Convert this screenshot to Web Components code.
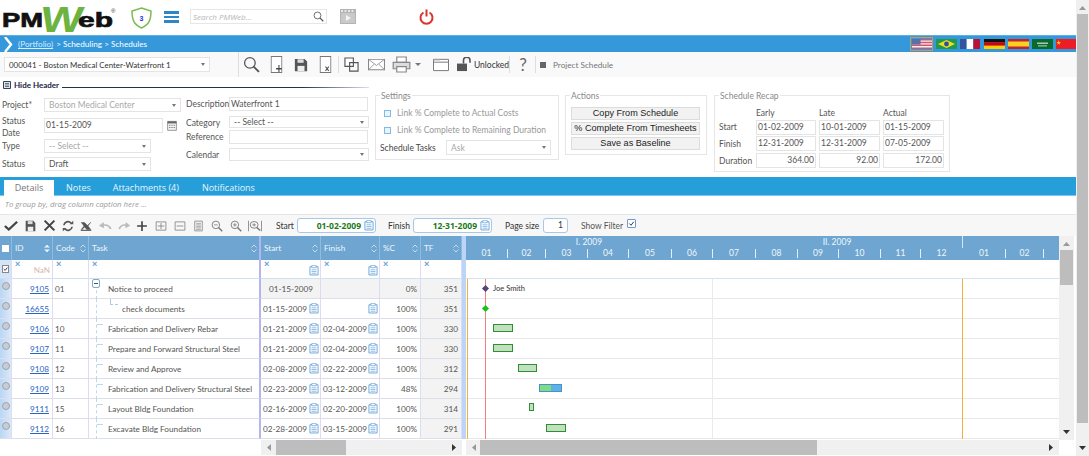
<!DOCTYPE html>
<html>
<head>
<meta charset="utf-8">
<title>PMWeb Schedules</title>
<style>
  html, body { margin: 0; padding: 0; background: #fff; overflow: hidden; }
  body { font-family: Lato, "Open Sans", sans-serif; font-size: 8.5px; color: #444; }
</style>
</head>
<body>
<pm-app>
  <pm-topbar></pm-topbar>
  <pm-crumb></pm-crumb>
  <pm-toolbar></pm-toolbar>
  <pm-header-form></pm-header-form>
  <pm-tabs></pm-tabs>
  <pm-grid-toolbar></pm-grid-toolbar>
  <pm-schedule></pm-schedule>
</pm-app>
<script>
// shared icon strokes, all drawn in a 16x16 box
const ICONS = {
  search: '<circle cx="6.500" cy="6.500" r="5" fill="none" stroke="#555" stroke-width="1.200"/><path d="M10 10l5 5" stroke="#555" stroke-width="1.800"/>',
  docPlus: '<path d="M1.500 .5h13v15h-13z" fill="#fff" stroke="#777"/><path d="M7.500 12h7M11 8.500v6.500" stroke="#444" stroke-width="1.300"/>',
  docX: '<path d="M1.500 .5h13v15h-13z" fill="#fff" stroke="#777"/><path d="M8 10l4 4M12 10l-4 4" stroke="#444" stroke-width="1.200"/>',
  save: '<path d="M1 1h11l3 3v11H1z" fill="#555"/><path d="M4 1.500h7v4H4z" fill="#ddd"/><path d="M4 9h8v6H4z" fill="#eee"/>',
  copy: '<path d="M1 1h9v9H1z" fill="#fff" stroke="#555" stroke-width="1.200"/><path d="M6 6h9v9H6z" fill="none" stroke="#555" stroke-width="1.200"/>',
  mail: '<path d="M.5 2.500h15v11H.5z" fill="#fff" stroke="#888"/><path d="M.5 2.500L8 9l7.500-6.500M.5 13.500L6 7.500M15.500 13.500L10 7.500" fill="none" stroke="#888" stroke-width=".8"/>',
  print: '<path d="M4 1h8v5H4z" fill="#fff" stroke="#888"/><path d="M1 6h14v6H1z" fill="#ddd" stroke="#888"/><path d="M4 10h8v5H4z" fill="#fff" stroke="#888"/>',
  folder: '<path d="M.5 2.500h15v12H.5z" fill="#fff" stroke="#777"/><path d="M.5 5.500h15" stroke="#777"/><path d="M1 3h6v2H1z" fill="#ddd"/>',
  lock: '<path d="M0 7h10v8H0z" fill="#555"/><path d="M6.500 7V3.500a3.200 3.200 0 0 1 6.500 0V6" fill="none" stroke="#555" stroke-width="1.600"/>',
  check: '<path d="M1 8.500l4.500 4.500L15 3.500" fill="none" stroke="#444" stroke-width="2.600"/>',
  cross: '<path d="M2 2l12 12M14 2L2 14" stroke="#444" stroke-width="2.600"/>',
  refresh: '<path d="M2.500 7a5.500 5.500 0 0 1 9.500-3M13.500 9a5.500 5.500 0 0 1-9.500 3" fill="none" stroke="#555" stroke-width="2.200"/><path d="M10 5.500h5V1zM6 10.500H1V15z" fill="#555"/>',
  excelX: '<path d="M1 3h5l4 4 4-4h1l-4 5 4 5H9L6 9.500 3 13H1l4-5z" fill="#555"/><path d="M1 13h14v1.500H1z" fill="#555"/>',
  undo: '<path d="M14.500 12C13 7.500 9.500 6 5 7" fill="none" stroke="#bbb" stroke-width="2.200"/><path d="M6.500 2.500L1 7.500l6 3.500z" fill="#bbb"/>',
  redo: '<path d="M1.500 12C3 7.500 6.500 6 11 7" fill="none" stroke="#bbb" stroke-width="2.200"/><path d="M9.500 2.500l5.500 5-6 3.500z" fill="#bbb"/>',
  plus: '<path d="M8 1.500v13M1.500 8h13" stroke="#444" stroke-width="2.200"/>',
  boxPlus: '<path d="M1.500 2.500h13v11h-13z" fill="none" stroke="#777"/><path d="M8 4v8M3.500 8h9" stroke="#777"/>',
  boxMinus: '<path d="M1.500 2.500h13v11h-13z" fill="none" stroke="#777"/><path d="M3.500 8h9" stroke="#777"/>',
  list: '<path d="M2.500 1.500h11v13h-11z" fill="none" stroke="#777"/><path d="M4.500 4.500h7M4.500 6.500h7M4.500 8.500h7M4.500 10.500h7M4.500 12.500h7" stroke="#777" stroke-width=".8"/>',
  zoomOut: '<circle cx="6.500" cy="6.500" r="5" fill="none" stroke="#777" stroke-width="1.200"/><path d="M10 10l5 5" stroke="#777" stroke-width="1.800"/><path d="M4 6.500h5" stroke="#777"/>',
  zoomIn: '<circle cx="6.500" cy="6.500" r="5" fill="none" stroke="#777" stroke-width="1.200"/><path d="M10 10l5 5" stroke="#777" stroke-width="1.800"/><path d="M4 6.500h5M6.500 4v5" stroke="#777"/>',
  zoomFit: '<path d="M.5 1v14M15.500 1v14" stroke="#777"/><circle cx="7" cy="6.500" r="4.500" fill="none" stroke="#777" stroke-width="1.100"/><path d="M10 10l4 4" stroke="#777" stroke-width="1.600"/><path d="M5 6.500h4M7 4.500v4" stroke="#777"/>',
  sched: '<path d="M1.500 2.500h13v12h-13z" fill="#fff" stroke="#5b9bd5" stroke-width="1.300"/><path d="M4.500 .5h7v3.500h-7z" fill="#fff" stroke="#5b9bd5"/><path d="M4 7h8M4 9.500h8M4 12h8" stroke="#5b9bd5"/>',
  calendar: '<path d="M1 2h14v13H1z" fill="#f4f4f4" stroke="#666"/><path d="M1 2h14v3H1z" fill="#666"/><path d="M3.500 7h2v1.500h-2zM7 7h2v1.500H7zM10.500 7h2v1.500h-2zM3.500 10h2v1.500h-2zM7 10h2v1.500H7zM10.500 10h2v1.500h-2z" fill="#777"/>'
};

function icon(name, w, h, extra) {
  return `<svg viewBox="0 0 16 16" width="${w}" height="${h || w}" preserveAspectRatio="none" style="display:block;flex:none;${extra || ''}">${ICONS[name]}</svg>`;
}

class PmElement extends HTMLElement {
  constructor() {
    super();
    this.attachShadow({mode: 'open'});
  }

  connectedCallback() {
    this.shadowRoot.innerHTML = this.render();
  }
}

class PmApp extends PmElement {
  render() {
    return `<style>
      :host { display: flex; width: 1089px; height: 456px; overflow: hidden; }
      main { width: 1076px; display: flex; flex-direction: column; }
    </style>
    <main><slot></slot></main>
    <pm-scrollbar vertical thumb-start="14" thumb-size="409" style="width:13px;height:456px"></pm-scrollbar>`;
  }
}

class PmScrollbar extends PmElement {
  render() {
    const vertical = this.hasAttribute('vertical');
    const start = this.getAttribute('thumb-start');
    const size = this.getAttribute('thumb-size');
    const arrows = vertical
      ? ['<path d="M1 5l3.500-4 3.500 4z" fill="#999"/>', '<path d="M1 1l3.500 4 3.500-4z" fill="#333"/>']
      : ['<path d="M5 1L1 4.500 5 8z" fill="#999"/>', '<path d="M1 1l4 3.500L1 8z" fill="#333"/>'];
    const svg = a => `<svg viewBox="0 0 ${vertical ? '9 6' : '6 9'}" width="${vertical ? 9 : 6}" height="${vertical ? 6 : 9}">${a}</svg>`;
    const thumb = vertical ? `height:${size}px;margin-top:${start}px` : `width:${size}px;margin-left:${start}px`;
    return `<style>
      :host { display: flex; flex-direction: ${vertical ? 'column' : 'row'}; background: #f0f0f0; align-items: stretch; flex: none; }
      .arrow { flex: none; ${vertical ? 'height:0' : 'width:0'}; display: flex; align-items: center; justify-content: center; position: relative; }
      .arrow svg { position: absolute; ${vertical ? 'left:50%;margin-left:-4.500px' : 'top:50%;margin-top:-4.500px'}; }
      .first svg { ${vertical ? 'top:5px' : 'left:5px'}; }
      .last svg { ${vertical ? 'bottom:5px' : 'right:5px'}; }
      .thumb { background: #bdbdbd; flex: none; ${vertical ? 'margin-left:1px;margin-right:1px' : 'margin-top:0;margin-bottom:0'}; ${thumb}; }
      .rest { flex: 1; }
    </style>
    <div class="arrow first">${svg(arrows[0])}</div><div class="thumb"></div><div class="rest"></div><div class="arrow last">${svg(arrows[1])}</div>`;
  }
}

class PmTopbar extends PmElement {
  render() {
    return `<style>
      :host { display: flex; align-items: flex-start; height: 35px; flex: none; background: #fff; }
      .logo { margin: 0 0 0 2px; flex: none; overflow: visible; }
      .shield { margin: 7px 0 0 14px; flex: none; }
      .burger { margin: 11px 0 0 12px; width: 15px; flex: none; display: flex; flex-direction: column; gap: 2px; }
      .burger i { display: block; height: 2.500px; background: #2f86c5; }
      .search { margin: 9px 0 0 11px; width: 137px; height: 15px; box-sizing: border-box; border: 1px solid #e6e6e6; display: flex; align-items: center; justify-content: space-between; padding: 0 2px 0 2px; color: #b5b5b5; font: italic 8px "Open Sans", sans-serif; }
      .video { margin: 9px 0 0 13px; flex: none; }
      .power { margin: 9px 0 0 63px; flex: none; }
    </style>
    <svg class="logo" width="115" height="33" viewBox="0 0 115 33">
      <text transform="translate(37 32) skewX(-9) scale(1 1.300)" x="0" y="0" font-family="Liberation Sans" font-weight="700" font-size="28" textLength="42" lengthAdjust="spacingAndGlyphs" fill="#6cb33f">W</text>
      <text x="0" y="27" font-family="Liberation Sans" font-weight="700" font-size="21" textLength="41" lengthAdjust="spacingAndGlyphs" fill="#111" stroke="#111" stroke-width=".7">PM</text>
      <text x="76" y="27" font-family="Liberation Sans" font-weight="700" font-size="20" textLength="35" lengthAdjust="spacingAndGlyphs" fill="#111" stroke="#111" stroke-width=".7">eb</text>
      <text x="109" y="13" font-family="Liberation Sans" font-size="6" fill="#333">®</text>
    </svg>
    <svg class="shield" width="21" height="22" viewBox="0 0 21 22">
      <path d="M10.500 1L20 4c0 9-2 13.500-9.500 17C3 17.500 1 13 1 4z" fill="#fff" stroke="#7dbb4e" stroke-width="1.500"/>
      <text x="10.500" y="14" font-family="Liberation Sans" font-weight="700" font-size="7" text-anchor="middle" fill="#1f2fe0">3</text>
    </svg>
    <div class="burger"><i></i><i></i><i></i></div>
    <div class="search"><span>Search PMWeb...</span>${icon('search', 11)}</div>
    <svg class="video" width="16" height="15" viewBox="0 0 16 15">
      <path d="M0 0h16v15H0z" fill="#b3b3b3"/><path d="M1 1h2v2H1zM4.500 1h2v2h-2zM8 1h2v2H8zM11.500 1h2v2h-2z" fill="#e8e8e8"/>
      <path d="M1 4h14v10H1z" fill="#c9c9c9"/><path d="M6 6l5 3-5 3z" fill="#f4f4f4"/>
    </svg>
    <svg class="power" width="15" height="16" viewBox="0 0 15 16">
      <path d="M4.500 3.500a6 6 0 1 0 6 0" fill="none" stroke="#d9342b" stroke-width="2"/><path d="M7.500 .5v7" stroke="#d9342b" stroke-width="2"/>
    </svg>`;
  }
}

class PmCrumb extends PmElement {
  render() {
    const f = (w, body, sel) => `<span class="flag${sel ? ' sel' : ''}"><svg width="${w}" height="10" viewBox="0 0 21 10" preserveAspectRatio="none">${body}</svg></span>`;
    const us = '<path d="M0 0h21v10H0z" fill="#f4f0f0"/><path d="M0 0h21v1.400H0zM0 2.800h21v1.400H0zM0 5.600h21v1.400H0zM0 8.400h21v1.600H0z" fill="#d0566c"/><path d="M0 0h9v5.600H0z" fill="#5a6ea8"/>';
    const br = '<path d="M0 0h21v10H0z" fill="#1f9a4c"/><path d="M10.500 1L19 5l-8.500 4L2 5z" fill="#f2dc22"/><circle cx="10.500" cy="5" r="2.400" fill="#2b4f9b"/>';
    const fr = '<path d="M0 0h7v10H0z" fill="#34549e"/><path d="M7 0h7v10H7z" fill="#fff"/><path d="M14 0h7v10h-7z" fill="#b8123a"/>';
    const de = '<path d="M0 0h21v3.400H0z" fill="#111"/><path d="M0 3.400h21v3.300H0z" fill="#dd0000"/><path d="M0 6.700h21V10H0z" fill="#ffce00"/>';
    const es = '<path d="M0 0h21v10H0z" fill="#c8202f"/><path d="M0 2.500h21v5H0z" fill="#f8d21f"/>';
    const sa = '<path d="M0 0h21v10H0z" fill="#0a6a2c"/><path d="M5 3.500h11v1.500H5z" fill="#a9cdb4"/><path d="M6 6.500h9v.8H6z" fill="#dfeee3"/>';
    const cn = '<path d="M0 0h21v10H0z" fill="#ee1c25"/><path d="M3.500 1.500l.8 2.200H6.500l-1.800 1.300.7 2.200-1.900-1.300-1.800 1.300.7-2.200L.6 3.700h2.100z" fill="#ffde00" transform="scale(.8)"/>';
    return `<style>
      :host { display: flex; align-items: center; height: 17px; flex: none; background: #3498db; color: #fff; border-top: 1px solid #5fb0e6; box-sizing: border-box; font: 8.200px Lato, sans-serif; }
      svg.chev { margin-left: 3px; flex: none; }
      u { margin-left: 5px; color: #d8ecfa; }
      span.t { margin-left: 3px; }
      .flags { margin-left: auto; display: flex; align-items: center; gap: 3.170px; }
      .flag { display: block; line-height: 0; }
      .flag.sel { border: 1px solid #c79a55; padding: 1px 0.500px; }
    </style>
    <svg class="chev" width="10" height="15" viewBox="0 0 10 15"><path d="M2 0l6 7.500L2 15" fill="none" stroke="#fff" stroke-width="2.400"/></svg>
    <u>(Portfolio)</u><span class="t">&gt; Scheduling &gt; Schedules</span>
    <div class="flags">${f(20, us, true)}${f(21, br)}${f(20, fr)}${f(21, de)}${f(21, es)}${f(21, sa)}${f(20, cn)}</div>`;
  }
}

class PmSelect extends PmElement {
  render() {
    const w = this.getAttribute('w');
    const h = this.getAttribute('h') || 14;
    const grey = this.hasAttribute('grey');
    const size = this.getAttribute('size') || 8.5;
    return `<style>
      :host { display: flex; align-items: center; justify-content: space-between; box-sizing: border-box; width: ${w}px; height: ${h}px; border: 1px solid #e4e4e4; background: #fff; padding: 0 4px 0 ${this.getAttribute('pad') || 4}px; color: ${grey ? '#a8a8a8' : '#555'}; font: ${size}px Lato, sans-serif; white-space: nowrap; }
      i { width: 0; height: 0; border: 2.500px solid transparent; border-top: 3px solid #777; border-bottom: 0; flex: none; }
    </style><span>${this.getAttribute('value') || ''}</span><i></i>`;
  }
}

class PmInput extends PmElement {
  render() {
    const w = this.getAttribute('w');
    const h = this.getAttribute('h') || 15;
    return `<style>
      :host { display: block; box-sizing: border-box; width: ${w}px; height: ${h}px; border: 1px solid #e4e4e4; background: #fff; padding: 0 1px; text-align: ${this.getAttribute('align') || 'left'}; color: #555; font: 8.500px/${h - 2}px Lato, sans-serif; white-space: nowrap; overflow: hidden; }
    </style>${this.getAttribute('value') || ''}`;
  }
}

class PmFieldset extends PmElement {
  render() {
    return `<style>
      :host { display: block; position: relative; box-sizing: border-box; width: ${this.getAttribute('w')}px; height: ${this.getAttribute('h')}px; border: 1px solid #e6e6e6; flex: none; padding: ${this.getAttribute('pad') || 0}; }
      b { position: absolute; left: 4px; top: -5px; padding: 0 1px; background: #fff; font: 400 8.500px/10px Lato, sans-serif; color: #8a8a8a; }
    </style><b>${this.getAttribute('legend')}</b><slot></slot>`;
  }
}

class PmToolbar extends PmElement {
  render() {
    return `<style>
      :host { display: flex; align-items: center; height: 25px; flex: none; background: #f9f9f9; font: 8.500px Lato, sans-serif; color: #555; }
      pm-select { margin-left: 4px; }
      .sep { width: 1px; height: 25px; background: #dedede; flex: none; }
      .sep.s { height: 17px; }
      .cb { width: 6px; height: 6px; background: #666; margin-left: 4px; flex: none; }
      .caret { width: 0; height: 0; border: 3px solid transparent; border-top: 3px solid #777; border-bottom: 0; flex: none; margin-left: 4px; }
      .q { width: 10px; flex: none; margin-left: 8px; font-size: 17px; line-height: 17px; color: #666; text-align: center; }
      .unl { width: 31px; flex: none; margin-left: 1px; color: #333; white-space: nowrap; }
    </style>
    <pm-select w="206" h="15" size="7.900" value="000041 - Boston Medical Center-Waterfront 1" style="color:#333"></pm-select>
    <div class="sep" style="margin-left:28px"></div>
    ${icon('search', 17, 17, 'margin-left:4px')}
    ${icon('docPlus', 13, 17, 'margin-left:10px')}
    ${icon('save', 14, 14, 'margin-left:11px')}
    ${icon('docX', 13, 17, 'margin-left:11px')}
    <div class="sep s" style="margin-left:6px"></div>
    ${icon('copy', 15, 15, 'margin-left:5px')}
    ${icon('mail', 17, 15, 'margin-left:9px')}
    ${icon('print', 19, 17, 'margin-left:7px')}
    <i class="caret"></i>
    ${icon('folder', 16, 15, 'margin-left:12px')}
    ${icon('lock', 16, 15, 'margin-left:8px')}
    <span class="unl">Unlocked</span>
    <div class="sep s" style="margin-left:4px"></div>
    <span class="q">?</span>
    <div class="sep s" style="margin-left:7px"></div>
    <div class="cb"></div>
    <span style="margin-left:7px;color:#777;font-size:8.200px">Project Schedule</span>`;
  }
}

class PmHeaderForm extends PmElement {
  render() {
    return `<style>
      :host { display: block; height: 100px; flex: none; background: #fff; font: 8.500px Lato, sans-serif; color: #555; }
      .hide { height: 15px; display: flex; align-items: center; padding-left: 3px; gap: 3px; color: #224; font-weight: 700; font-size: 8px; }
      .hide svg { flex: none; }
      .hide .rule { width: 307px; height: 1px; margin-top: 5px; background: linear-gradient(90deg, #234 0, #234 78%, #dde 100%); }
      .body { display: flex; align-items: flex-start; padding: 3px 0 0 2px; }
      .left, .right { display: grid; flex: none; align-items: start; }
      .left { margin-top: 3px; width: 184px; grid-template-columns: 42px 142px; grid-template-rows: 20px 21px 18px 14px; }
      .right { margin-top: 2px; grid-template-columns: 43px 146px; grid-template-rows: 19px 14px 18px 14px; width: 189px; }
      .lbl { line-height: 11px; margin-top: 2px; }
      .lbl.two { margin-top: -3px; line-height: 12px; }
      .row { display: flex; align-items: center; gap: 4px; }
      .check { display: flex; align-items: center; color: #999; height: 12px; gap: 6px; padding-left: 8px; }
      .check i { display: block; box-sizing: border-box; width: 7px; height: 7px; border: 1px solid #7fbbe8; background: #e8f3fb; }
      .tasks { display: flex; align-items: center; padding-left: 4px; margin-top: 4px; color: #444; }
      .actions { display: flex; flex-direction: column; gap: 2px; padding: 11px 0 0 5px; }
      .btn { box-sizing: border-box; width: 129px; height: 13px; background: #f2f2f2; border: 1px solid #dcdcdc; font: 9.100px/11px "Liberation Sans", sans-serif; color: #222; text-align: center; white-space: nowrap; }
      .recap { display: grid; grid-template-columns: 37px 63px 64px 62px; grid-template-rows: 13px 16px 17px 17px; padding: 10px 0 0 4px; align-items: center; color: #555; }
    </style>
    <div class="hide">
      <svg width="8" height="8" viewBox="0 0 8 8"><path d="M.5.5h7v7h-7z" fill="#dfe6f0" stroke="#345"/><path d="M2 2.800h4M2 5.200h4" stroke="#345"/></svg>
      <span>Hide Header</span><div class="rule"></div>
    </div>
    <div class="body">
      <div class="left">
        <span class="lbl">Project*</span><pm-select w="137" value="Boston Medical Center" grey></pm-select>
        <span class="lbl two">Status<br>Date</span><div class="row"><pm-input w="119" value="01-15-2009"></pm-input>${icon('calendar', 10, 11)}</div>
        <span class="lbl">Type</span><pm-select w="107" value="-- Select --" grey></pm-select>
        <span class="lbl">Status</span><pm-select w="107" value="Draft"></pm-select>
      </div>
      <div class="right">
        <span class="lbl">Description</span><pm-input w="139" h="14" value="Waterfront 1"></pm-input>
        <span class="lbl">Category</span><pm-select w="140" h="12" value="-- Select --"></pm-select>
        <span class="lbl">Reference</span><pm-input w="139" h="14"></pm-input>
        <span class="lbl">Calendar</span><pm-select w="140" h="13"></pm-select>
      </div>
      <pm-fieldset legend="Settings" w="184" h="65" pad="11px 0 0 0">
        <div class="check"><i></i>Link % Complete to Actual Costs</div>
        <div style="height:5px"></div>
        <div class="check"><i></i>Link % Complete to Remaining Duration</div>
        <div class="tasks"><span style="width:66px">Schedule Tasks</span><pm-select w="105" h="15" value="Ask" grey></pm-select></div>
      </pm-fieldset>
      <pm-fieldset legend="Actions" w="142" h="60" style="margin-left:6px">
        <div class="actions"><div class="btn">Copy From Schedule</div><div class="btn">% Complete From Timesheets</div><div class="btn">Save as Baseline</div></div>
      </pm-fieldset>
      <pm-fieldset legend="Schedule Recap" w="236" h="77" style="margin-left:7px">
        <div class="recap">
          <span></span><span>Early</span><span>Late</span><span>Actual</span>
          <span>Start</span><pm-input w="60" value="01-02-2009"></pm-input><pm-input w="61" value="10-01-2009"></pm-input><pm-input w="61" value="01-15-2009"></pm-input>
          <span>Finish</span><pm-input w="60" value="12-31-2009"></pm-input><pm-input w="61" value="12-31-2009"></pm-input><pm-input w="61" value="07-05-2009"></pm-input>
          <span>Duration</span><pm-input w="60" align="right" value="364.00"></pm-input><pm-input w="61" align="right" value="92.00"></pm-input><pm-input w="61" align="right" value="172.00"></pm-input>
        </div>
      </pm-fieldset>
    </div>`;
  }
}

class PmTabs extends PmElement {
  render() {
    return `<style>
      :host { display: block; flex: none; font: 9px "Open Sans", sans-serif; }
      .band { height: 19px; box-sizing: border-box; background: #259ed9; border-bottom: 1px solid #7fc4ea; display: flex; align-items: flex-end; padding-left: 4px; color: #e8f5fc; }
      span { display: block; height: 15px; line-height: 15px; }
      .on { width: 50px; height: 16px; background: #fff; color: #777; text-align: center; margin-bottom: -1px; }
      .hint { height: 19px; box-sizing: border-box; padding: 2px 0 0 5px; font: italic 7.800px/12px "Open Sans", sans-serif; color: #999; border-bottom: 1px solid #e6e6e6; }
    </style>
    <div class="band"><span class="on">Details</span><span style="margin-left:12px">Notes</span><span style="margin-left:22px">Attachments (4)</span><span style="margin-left:23px">Notifications</span></div>
    <div class="hint">To group by, drag column caption here ...</div>`;
  }
}

class PmGridToolbar extends PmElement {
  render() {
    const field = (w, text) => `<div class="date" style="width:${w}px"><b>${text}</b>${icon('sched', 10, 11)}</div>`;
    const label = (w, ml, text) => `<span style="display:block;flex:none;width:${w}px;margin-left:${ml}px;white-space:nowrap">${text}</span>`;
    return `<style>
      :host { display: flex; align-items: center; height: 21px; flex: none; background: #f7f7f7; padding-left: 4px; font: 8.500px Lato, sans-serif; color: #333; box-sizing: border-box; width: 1076px; }
      .date { box-sizing: border-box; height: 15px; border: 1px solid #a8c8e8; border-radius: 3px; background: #fff; display: flex; align-items: center; justify-content: flex-end; gap: 3px; padding-right: 1px; flex: none; }
      .date b { color: #1a7a1a; font: 700 8.500px "Open Sans", sans-serif; }
      .page { box-sizing: border-box; height: 15px; width: 25px; border: 1px solid #a8c8e8; border-radius: 3px; background: #fff; text-align: right; padding-right: 4px; line-height: 13px; flex: none; }
      .cb { box-sizing: border-box; width: 9px; height: 9px; border: 1px solid #6a9bd0; border-radius: 1px; background: #fff; margin: -4px 0 0 0; flex: none; }
      .cb svg { display: block; }
    </style>
    ${icon('check', 14, 13)}
    ${icon('save', 11, 12, 'margin-left:7px')}
    ${icon('cross', 13, 13, 'margin-left:7px')}
    ${icon('refresh', 12, 12, 'margin-left:6px')}
    ${icon('excelX', 12, 12, 'margin-left:6px')}
    ${icon('undo', 14, 12, 'margin-left:6px')}
    ${icon('redo', 13, 12, 'margin-left:6px')}
    ${icon('plus', 12, 12, 'margin-left:5px')}
    ${icon('boxPlus', 12, 12, 'margin-left:7px')}
    ${icon('boxMinus', 12, 12, 'margin-left:7px')}
    ${icon('list', 11, 12, 'margin-left:7px')}
    ${icon('zoomOut', 12, 12, 'margin-left:7px')}
    ${icon('zoomIn', 12, 12, 'margin-left:7px')}
    ${icon('zoomFit', 14, 12, 'margin-left:6px')}
    ${label(21, 14, 'Start')}
    ${field(79, '01-02-2009')}
    ${label(25, 12, 'Finish')}
    ${field(79, '12-31-2009')}
    ${label(38, 13, 'Page size')}
    <div class="page">1</div>
    ${label(46, 13, '<span style="color:#555">Show Filter</span>')}
    <div class="cb"><svg viewBox="0 0 8 8" width="7" height="7"><path d="M1.500 4l2 2 3-4" fill="none" stroke="#333" stroke-width="1.100"/></svg></div>`;
  }
}

const TASKS = [
  {id: '9105', code: '01', task: 'Notice to proceed', start: '01-15-2009', finish: '', pct: '0%', tf: '351', root: true},
  {id: '16655', code: '', task: 'check documents', start: '01-15-2009', finish: '', pct: '100%', tf: '351', child: true},
  {id: '9106', code: '10', task: 'Fabrication and Delivery Rebar', start: '01-21-2009', finish: '02-04-2009', pct: '100%', tf: '330'},
  {id: '9107', code: '11', task: 'Prepare and Forward Structural Steel', start: '01-21-2009', finish: '02-04-2009', pct: '100%', tf: '330'},
  {id: '9108', code: '12', task: 'Review and Approve', start: '02-08-2009', finish: '02-22-2009', pct: '100%', tf: '312'},
  {id: '9109', code: '13', task: 'Fabrication and Delivery Structural Steel', start: '02-23-2009', finish: '03-12-2009', pct: '48%', tf: '294'},
  {id: '9111', code: '15', task: 'Layout Bldg Foundation', start: '02-16-2009', finish: '02-20-2009', pct: '100%', tf: '314'},
  {id: '9112', code: '16', task: 'Excavate Bldg Foundation', start: '02-28-2009', finish: '03-15-2009', pct: '100%', tf: '291'}
];

class PmTaskTable extends PmElement {
  render() {
    const sort = filled => `<svg class="sort" width="6" height="9" viewBox="0 0 6 9"><path d="M.5 3.500L3 1l2.500 2.500M.5 5.500L3 8l2.500-2.500" fill="${filled ? '#eaf3fa' : 'none'}" stroke="#eaf3fa" stroke-width=".7"/></svg>`;
    const heads = [['ID', true], ['Code'], ['Task'], ['Start'], ['Finish'], ['%C'], ['TF']]
      .map(([t, f]) => `<div class="h">${t}${sort(f)}</div>`).join('');
    const x = '<i class="x">×</i>';
    const cal = icon('sched', 10, 11);
    const rows = TASKS.map((t, n) => `
      <div class="c sel"><span class="radio"></span></div>
      <div class="c id"><u>${t.id}</u></div>
      <div class="c">${t.code}</div>
      <div class="c task">
        <span class="tree"></span>
        ${t.root ? '<span class="box"><i></i></span>' : t.child ? '<span class="elbow"></span>' : '<span class="dash"></span>'}
        <span class="name" style="margin-left:${t.child ? 33 : 19}px">${t.task}</span>
      </div>
      <div class="c date${t.root ? ' grey center' : ''}"><span>${t.start}</span>${t.root ? '' : cal}</div>
      <div class="c date${t.root ? ' grey' : ''}"><span>${t.finish}</span>${t.root ? '' : cal}</div>
      <div class="c num${t.root ? ' grey' : ''}">${t.pct}</div>
      <div class="c num grey">${t.tf}</div>`).join('');
    return `<style>
      :host { display: block; width: 462px; flex: none; font: 8.200px Lato, sans-serif; color: #555; }
      .grid { display: grid; grid-template-columns: 12px 41px 36px 172px 60px 59px 41px 41px; grid-template-rows: 24px 19px repeat(8, 20px); }
      .h0, .h { background: #6ea6d1; color: #eef6fb; display: flex; align-items: center; justify-content: space-between; box-sizing: border-box; padding: 0 2px 0 3px; border-right: 1px solid #8fbbdd; }
      .h:nth-child(4) { border-right: 2px solid #b5b5ee; }
      .h0 { padding: 0; justify-content: center; }
      .h0 i { display: block; width: 7px; height: 7px; background: #fff; }
      .f { position: relative; background: #fff; box-sizing: border-box; border-right: 1px solid #dcdcf6; border-bottom: 1px solid #cfe0ee; }
      .x { position: absolute; left: 3px; top: 0; font: 700 9px/9px "Liberation Sans", sans-serif; color: #6ba3d6; }
      .f.task { border-right: 2px solid #b5b5ee; }
      .f .nan { position: absolute; right: 2px; top: 5px; color: #d8b8b0; }
      .f svg { position: absolute; right: 1px; bottom: 2px; }
      .f.sel { background: #d4e5f8; }
      .f.sel b { position: absolute; left: 2px; top: 5px; box-sizing: border-box; width: 7px; height: 8px; background: #fff; border: 1px solid #888; }
      .f.sel b svg { position: static; display: block; }
      .c { box-sizing: border-box; background: #fff; border-right: 1px solid #dcdcf6; border-bottom: 1px solid #dedeea; display: flex; align-items: center; padding: 0 2px; white-space: nowrap; position: relative; min-width: 0; }
      .sel { background: linear-gradient(90deg, #b9d6f5, #dbe9f8); padding: 0; justify-content: center; }
      .radio { display: block; width: 8px; height: 8px; margin-top: -5px; border-radius: 50%; background: #c9cdd3; border: 1px solid #9aa5b0; box-sizing: border-box; }
      .id { justify-content: flex-end; color: #2a63c4; padding-right: 3px; }
      .task { padding: 0; border-right: 2px solid #b5b5ee; }
      .tree { position: absolute; left: 7px; top: 0; bottom: -1px; border-left: 1px dashed #bcd9ea; }
      .box { position: absolute; left: 3px; top: 0; width: 8px; height: 9px; box-sizing: border-box; background: #fff; border: 1px solid #7fa9c8; border-radius: 2px; }
      .box i { position: absolute; left: 1px; right: 1px; top: 3px; height: 1px; background: #456; }
      .dash { position: absolute; left: 8px; top: 5px; width: 6px; border-top: 1px dashed #bcd9ea; }
      .elbow { position: absolute; left: 21px; top: 0; width: 7px; height: 5px; border-left: 1px dashed #a9cde3; border-bottom: 1px dashed #a9cde3; }
      .date { justify-content: space-between; padding: 0 1px 0 2px; }
      .center { justify-content: center; }
      .num { justify-content: flex-end; padding-right: 3px; }
      .grey { background: #f3f3f3; }
    </style>
    <div class="grid">
      <div class="h0"><i></i></div>${heads}
      <div class="f sel"><b><svg viewBox="0 0 7 8" width="5" height="6"><path d="M1 4l2 2 3-4" fill="none" stroke="#222" stroke-width="1.200"/></svg></b></div>
      <div class="f">${x}<span class="nan">NaN</span></div>
      <div class="f">${x}</div>
      <div class="f task">${x}</div>
      <div class="f">${x}${cal}</div>
      <div class="f">${x}${cal}</div>
      <div class="f">${x}</div>
      <div class="f">${x}</div>
      ${rows}
    </div>
    <div style="display:flex;height:15px;margin-top:1px">
      <div style="width:261px;flex:none"></div>
      <pm-scrollbar thumb-start="15" thumb-size="70" style="width:201px;height:15px"></pm-scrollbar>
    </div>`;
  }
}

const MONTHS = [['01', 42], ['02', 38], ['03', 42], ['04', 41], ['05', 43], ['06', 41], ['07', 43], ['08', 42], ['09', 41], ['10', 42], ['11', 40], ['12', 42], ['01', 43], ['02', 38], ['', 56]];

// gantt bars sit at their date position on a free canvas
const BARS = [
  {row: 2, x: 27, w: 20},
  {row: 3, x: 27, w: 20},
  {row: 4, x: 52, w: 19},
  {row: 5, x: 73, w: 23, blue: 11},
  {row: 6, x: 63, w: 5, top: 124},
  {row: 7, x: 80, w: 20}
];

class PmGantt extends PmElement {
  render() {
    const months = MONTHS.map(([m, w], n) => `<span style="width:${w}px;${n === 11 ? 'border-color:transparent' : ''}">${m}</span>`).join('');
    const rows = Array.from({length: 8}, () => '<div class="r"></div>').join('');
    const bars = BARS.map(b => {
      const top = b.top || 20 * b.row + 5;
      const inner = b.blue ? `<i style="width:${b.blue}px"></i>` : '';
      return `<div class="bar${b.blue ? ' blue' : ''}" style="left:${b.x}px;top:${top}px;width:${b.w}px">${inner}</div>`;
    }).join('');
    return `<style>
      :host { display: block; width: 593px; flex: none; font: 8.500px Lato, sans-serif; }
      .head { height: 24px; background: #6ea6d1; color: #eef6fb; position: relative; overflow: hidden; }
      .years { display: flex; height: 12px; line-height: 13px; text-align: center; }
      .years span { width: 246px; } .years span + span { width: 250px; border-right: 1px solid #d6e7f4; }
      .months { display: flex; height: 12px; line-height: 12px; text-align: center; }
      .months span { flex: none; box-sizing: border-box; border-right: 1px solid #e4f0f8; height: 9px; margin-top: 1px; line-height: 9px; }
      .filter { height: 19px; box-sizing: border-box; border-bottom: 1px solid #d5e3ee; background: #fff; }
      .canvas { position: relative; height: 160px; overflow: hidden; background: #fff; }
      .r { height: 20px; box-sizing: border-box; border-bottom: 1px solid #e8e8e8; }
      .v { position: absolute; top: 0; bottom: 0; width: 1px; }
      .bar { position: absolute; height: 8px; box-sizing: border-box; background: #c2dfbe; border: 1px solid #2f8f35; }
      .bar.blue { background: #5fb2e6; border-color: #4a8fd0; }
      .bar.blue i { display: block; height: 100%; background: #7fdc7f; }
      .dia { position: absolute; width: 5px; height: 5px; transform: rotate(45deg); }
      .who { position: absolute; left: 27px; top: 5px; font-size: 7.500px; line-height: 10px; color: #333; }
    </style>
    <div class="head">
      <div class="years"><span>I. 2009</span><span>II. 2009</span></div>
      <div class="months">${months}</div>
    </div>
    <div class="filter"></div>
    <div class="canvas">
      ${rows}
      <div class="v" style="left:1px;background:#f2b13c"></div>
      <div class="v" style="left:246px;background:#eaeaea"></div>
      <div class="v" style="left:496px;background:#f2b13c"></div>
      <div class="v" style="left:19px;background:#f08080"></div>
      <div class="dia" style="left:17px;top:7px;background:#554477"></div>
      <div class="dia" style="left:17px;top:27px;background:#19c119"></div>
      <span class="who">Joe Smith</span>
      ${bars}
    </div>
    <div style="height:1px"></div>
    <pm-scrollbar thumb-start="14" thumb-size="337" style="width:593px;height:15px"></pm-scrollbar>`;
  }
}

class PmSchedule extends PmElement {
  render() {
    return `<style>
      :host { display: flex; flex: none; width: 1076px; height: 220px; overflow: hidden; background: #fff; }
      .split { width: 4px; flex: none; background: #bcd4f7; height: 203px; }
    </style>
    <pm-task-table></pm-task-table>
    <div class="split"></div>
    <pm-gantt></pm-gantt>
    <pm-scrollbar vertical thumb-start="14" thumb-size="35" style="width:15px;height:204px"></pm-scrollbar>`;
  }
}

customElements.define('pm-scrollbar', PmScrollbar);
customElements.define('pm-select', PmSelect);
customElements.define('pm-input', PmInput);
customElements.define('pm-fieldset', PmFieldset);
customElements.define('pm-topbar', PmTopbar);
customElements.define('pm-crumb', PmCrumb);
customElements.define('pm-toolbar', PmToolbar);
customElements.define('pm-header-form', PmHeaderForm);
customElements.define('pm-tabs', PmTabs);
customElements.define('pm-grid-toolbar', PmGridToolbar);
customElements.define('pm-task-table', PmTaskTable);
customElements.define('pm-gantt', PmGantt);
customElements.define('pm-schedule', PmSchedule);
customElements.define('pm-app', PmApp);
</script>
</body>
</html>
